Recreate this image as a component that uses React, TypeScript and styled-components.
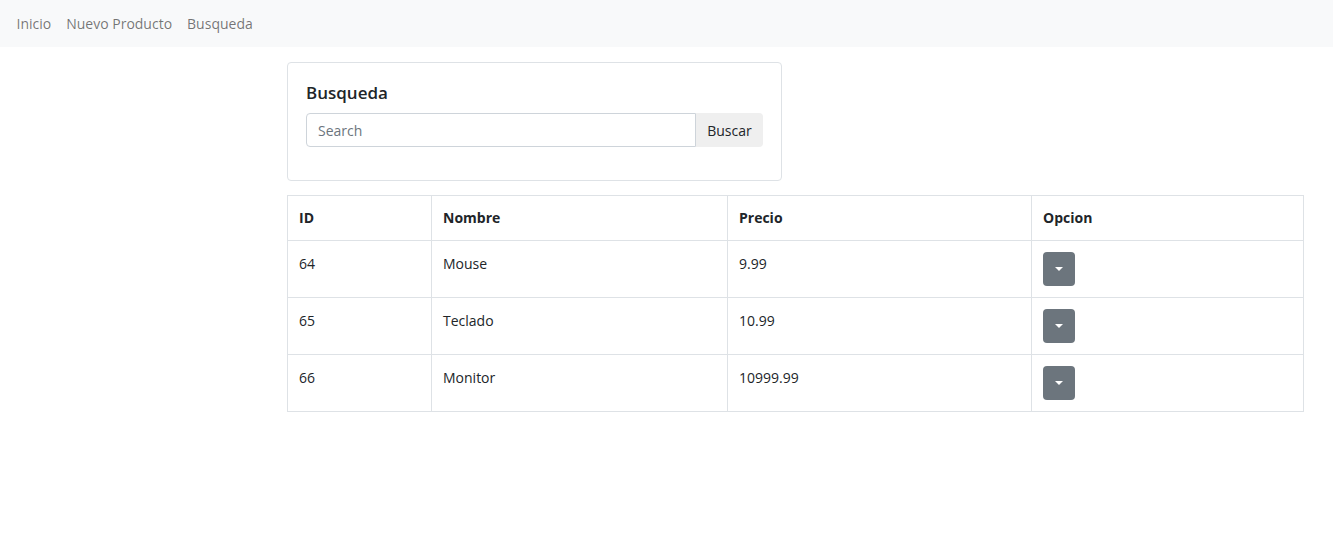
import React from "react";
import styled, { createGlobalStyle } from "styled-components";

const Global = createGlobalStyle`
  body { margin: 0; font-family: "Open Sans", "Noto Sans", sans-serif; font-size: 14px; color: #212529; background: #fff; }
  * { box-sizing: border-box; }
`;

const Navbar = styled.nav`
  height: 47px;
  background: #f8f9fa;
  display: flex;
  align-items: center;
  padding: 0 9px 1px;
`;

const NavLink = styled.a`
  color: rgba(0, 0, 0, 0.55);
  font-size: 14px;
  padding: 0 7.5px;
  text-decoration: none;
  cursor: pointer;
`;

const Main = styled.main`
  padding: 15px 29px 0 287px;
  display: flex;
  flex-direction: column;
  gap: 14px;
`;

const Card = styled.section`
  width: 495px;
  border: 1px solid #dee2e6;
  border-radius: 4px;
  padding: 18px 18px 33px;
`;

const CardTitle = styled.h5`
  margin: 0 0 8px;
  font-size: 17px;
  font-weight: 600;
  line-height: 24px;
  color: #212529;
`;

const InputGroup = styled.div`
  display: flex;
  height: 34px;
`;

const SearchInput = styled.input`
  flex: 1;
  border: 1px solid #ced4da;
  border-radius: 4px 0 0 4px;
  padding: 0 11px;
  font: inherit;
  font-size: 14px;
  color: #212529;
  outline: none;
  &::placeholder { color: #6c757d; }
`;

const SearchButton = styled.button`
  width: 67px;
  border: none;
  background: #efefef;
  border-radius: 0 4px 4px 0;
  font: inherit;
  font-size: 14px;
  color: #212529;
  padding: 0;
`;

const Table = styled.table`
  width: 100%;
  border-collapse: collapse;
  font-size: 14px;
`;

const Th = styled.th<{ $w?: number }>`
  text-align: left;
  font-weight: 700;
  border: 1px solid #dee2e6;
  padding: 11px 11px 12px;
  line-height: 21px;
  width: ${(p) => (p.$w ? `${p.$w}px` : "auto")};
`;

const Td = styled.td`
  border: 1px solid #dee2e6;
  padding: 11px;
  vertical-align: top;
  line-height: 24px;
  height: 56px;
`;

const DropBtn = styled.button`
  width: 32px;
  height: 34px;
  border: none;
  border-radius: 4px;
  background: #6c757d;
  display: flex;
  align-items: center;
  justify-content: center;
  padding: 0;
  cursor: pointer;
`;

const Caret = styled.span`
  width: 0;
  height: 0;
  border-left: 4px solid transparent;
  border-right: 4px solid transparent;
  border-top: 4px solid #fff;
`;

const rows = [
  { id: 64, nombre: "Mouse", precio: "9.99" },
  { id: 65, nombre: "Teclado", precio: "10.99" },
  { id: 66, nombre: "Monitor", precio: "10999.99" },
];

export default function App() {
  return (
    <>
      <Global />
      <Navbar>
        <NavLink>Inicio</NavLink>
        <NavLink>Nuevo Producto</NavLink>
        <NavLink>Busqueda</NavLink>
      </Navbar>
      <Main>
        <Card>
          <CardTitle>Busqueda</CardTitle>
          <InputGroup>
            <SearchInput placeholder="Search" />
            <SearchButton>Buscar</SearchButton>
          </InputGroup>
        </Card>
        <Table>
          <thead>
            <tr>
              <Th $w={144}>ID</Th>
              <Th $w={296}>Nombre</Th>
              <Th $w={304}>Precio</Th>
              <Th>Opcion</Th>
            </tr>
          </thead>
          <tbody>
            {rows.map((r) => (
              <tr key={r.id}>
                <Td>{r.id}</Td>
                <Td>{r.nombre}</Td>
                <Td>{r.precio}</Td>
                <Td>
                  <DropBtn aria-label="Opciones">
                    <Caret />
                  </DropBtn>
                </Td>
              </tr>
            ))}
          </tbody>
        </Table>
      </Main>
    </>
  );
}
